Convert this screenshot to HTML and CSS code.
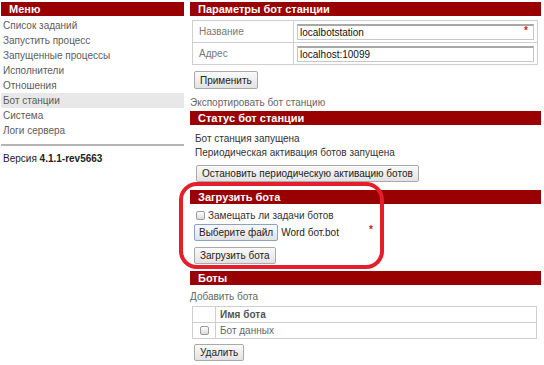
FILE: index.html
```html
<!DOCTYPE html>
<html lang="ru">
<head>
    <meta charset="UTF-8">
    <title>Бот станции</title>
    <link rel="stylesheet" href="styles.css">
</head>
<body>
    <div class="page">
        <div class="sidebar">
            <div class="bar">Меню</div>
            <ul class="menu">
                <li>Список заданий</li>
                <li>Запустить процесс</li>
                <li>Запущенные процессы</li>
                <li>Исполнители</li>
                <li>Отношения</li>
                <li class="active">Бот станции</li>
                <li>Система</li>
                <li>Логи сервера</li>
            </ul>
            <div class="version">Версия <b>4.1.1-rev5663</b></div>
        </div>

        <div class="main">
            <div class="bar">Параметры бот станции</div>
            <table class="params">
                <tr>
                    <td class="label">Название</td>
                    <td><div class="field">localbotstation<span class="req">*</span></div></td>
                </tr>
                <tr>
                    <td class="label">Адрес</td>
                    <td><div class="field">localhost:10099</div></td>
                </tr>
            </table>
            <div class="actions"><button class="btn">Применить</button></div>
            <div class="link export">Экспортировать бот станцию</div>

            <div class="bar">Статус бот станции</div>
            <div class="status">
                <p>Бот станция запущена</p>
                <p>Периодическая активация ботов запущена</p>
            </div>
            <div class="actions stop"><button class="btn">Остановить периодическую активацию ботов</button></div>

            <div class="bar upload-bar">Загрузить бота</div>
            <div class="upload">
                <label class="check-row"><input type="checkbox" class="box"> Замещать ли задачи ботов</label>
                <div class="file-row">
                    <button class="btn file-btn">Выберите файл</button>
                    <span class="file-name">Word бот.bot</span>
                    <span class="req file-req">*</span>
                </div>
                <button class="btn">Загрузить бота</button>
            </div>

            <div class="bar bots-bar">Боты</div>
            <div class="link add">Добавить бота</div>
            <table class="bots">
                <tr>
                    <th class="sel"></th>
                    <th>Имя бота</th>
                </tr>
                <tr>
                    <td class="sel"><input type="checkbox" class="box"></td>
                    <td>Бот данных</td>
                </tr>
            </table>
            <div class="actions"><button class="btn">Удалить</button></div>
        </div>

        <div class="mark"></div>
    </div>
</body>
</html>
```

FILE: styles.css
```css
* {
    box-sizing: border-box;
}
body {
    margin: 0;
    background: #fff;
    font-family: "Liberation Sans", Arial, sans-serif;
    font-size: 10px;
    color: #333;
}
.page {
    position: relative;
    display: flex;
    gap: 6px;
    padding: 2px 0 0 1px;
}
.sidebar {
    width: 183px;
}
.main {
    width: 351px;
}
.bar {
    height: 14px;
    line-height: 14px;
    background-color: #990000;
    color: #fff;
    font-size: 11px;
    font-weight: bold;
    padding-left: 8px;
}

/* menu */
.menu {
    list-style: none;
    margin: 2px 0 0;
    padding: 0;
}
.menu li {
    height: 15px;
    line-height: 15px;
    padding-left: 2px;
    color: #5c5c5c;
}
.menu li.active {
    background-color: #e8e8e8;
}
.version {
    margin-top: 6px;
    border-top: 2px solid #b4b4b4;
    padding-top: 7px;
    padding-left: 2px;
    color: #222;
}

/* buttons */
.btn {
    font-family: inherit;
    font-size: 10px;
    color: #222;
    height: 17px;
    padding: 0 5px;
    white-space: nowrap;
    border: 1px solid #a9a9a9;
    border-radius: 2px;
    background: linear-gradient(#fafafa, #e2e2e2);
}
.actions {
    padding-left: 4px;
}

/* params */
.params {
    border-collapse: collapse;
    margin: 4px 3px 0 2px;
    width: 346px;
}
.params td {
    border: 1px solid #cfcfcf;
    height: 22px;
    padding: 0 3px;
}
.params td.label {
    width: 101px;
    padding-left: 6px;
    color: #777;
}
.field {
    position: relative;
    height: 16px;
    line-height: 14px;
    border: 1px solid #c8c8c8;
    border-top: 2px solid #a8a8a8;
    padding-left: 2px;
    color: #111;
}
.req {
    color: #d42020;
    font-weight: bold;
}
.field .req {
    position: absolute;
    right: 5px;
    top: -2px;
}
.params + .actions {
    margin-top: 6px;
}
.params + .actions .btn {
    height: 18px;
}
.link {
    color: #666;
}
.export {
    margin: 7px 0 1px;
    height: 14px;
    line-height: 14px;
}

/* status */
.status {
    padding: 7px 0 0 5px;
}
.status p {
    margin: 0;
    height: 14px;
    line-height: 14px;
}
.stop {
    margin-top: 5px;
    padding-left: 6px;
}
.upload-bar {
    margin-top: 8px;
}

/* upload */
.upload {
    padding: 4px 0 0 4px;
}
.check-row {
    display: flex;
    align-items: center;
    height: 14px;
    gap: 3px;
    padding-left: 2px;
}
.box {
    appearance: none;
    -webkit-appearance: none;
    width: 9px;
    height: 9px;
    margin: 0;
    border: 1px solid #9a9a9a;
    border-radius: 2px;
    background: linear-gradient(#fdfdfd, #dcdcdc);
}
.file-row {
    display: flex;
    align-items: center;
    margin: 2px 0 6px;
}
.file-btn {
    border-color: #8aa3c4;
    height: 17px;
    padding: 0 4px;
}
.file-name {
    margin-left: 3px;
    color: #222;
}
.file-req {
    margin: -6px 0 0 30px;
}
.bots-bar {
    margin-top: 7px;
}

/* bots */
.add {
    margin: 5px 0 0;
    height: 15px;
    line-height: 14px;
}
.bots {
    border-collapse: collapse;
    margin: 1px 4px 0 2px;
    width: 345px;
}
.bots th,
.bots td {
    border: 1px solid #cfcfcf;
    height: 16px;
    padding: 0 4px;
    text-align: left;
    color: #666;
}
.bots th {
    font-weight: bold;
    color: #555;
}
.bots .sel {
    width: 23px;
    padding: 0 0 0 7px;
}
.bots .box {
    display: block;
}
.bots + .actions {
    margin-top: 5px;
}

/* red annotation */
.mark {
    position: absolute;
    left: 179px;
    top: 182px;
    width: 205px;
    height: 87px;
    border: 4px solid #e41f2b;
    border-radius: 18px;
}
```
